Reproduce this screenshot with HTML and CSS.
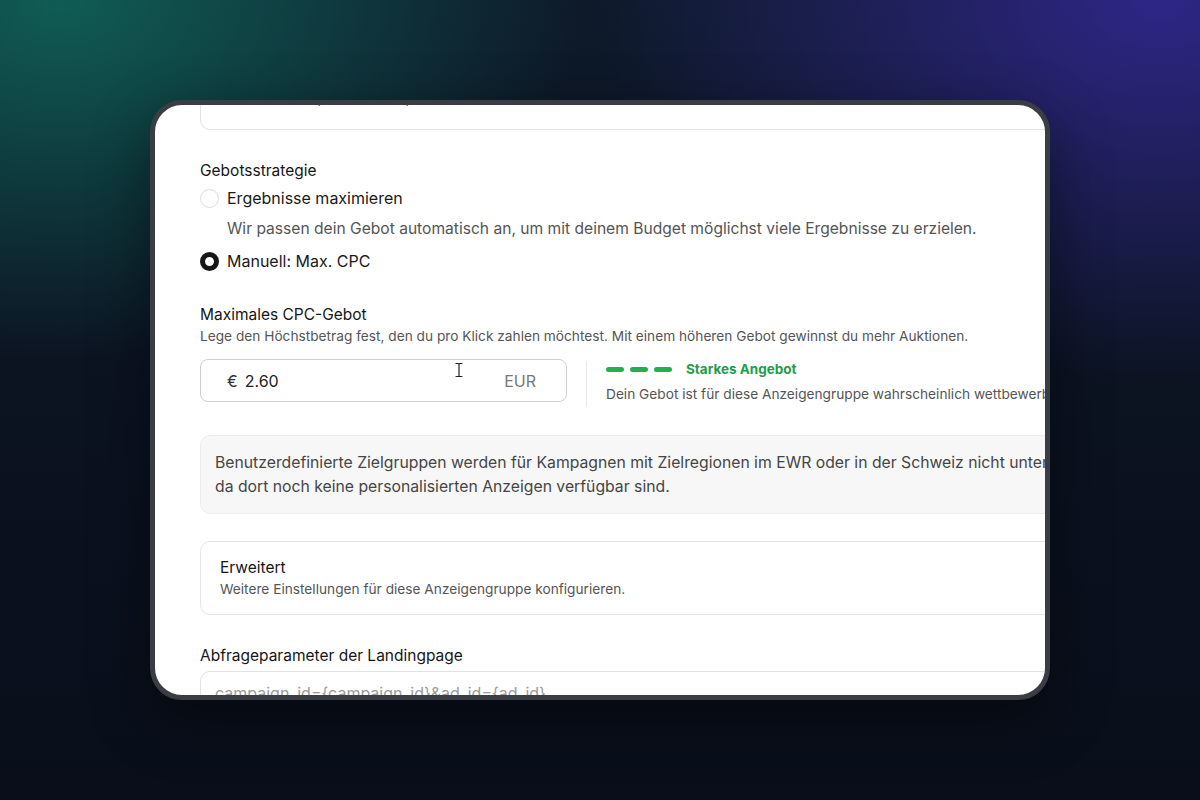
FILE: index.html
```html
<!DOCTYPE html>
<html lang="de">
<head>
<meta charset="utf-8">
<title>Gebotsstrategie</title>
<link rel="stylesheet" href="styles.css">
</head>
<body>
<div class="stage">
  <div class="device">
    <div class="screen">
      <div class="content">
        <div class="top-input"><span class="top-text">Deutschland, Österreich, Schweiz (DACH)</span></div>

        <div class="section strategy">
          <div class="label">Gebotsstrategie</div>
          <div class="radio-row">
            <span class="radio"></span>
            <span class="radio-label">Ergebnisse maximieren</span>
          </div>
          <div class="radio-desc">Wir passen dein Gebot automatisch an, um mit deinem Budget möglichst viele Ergebnisse zu erzielen.</div>
          <div class="radio-row">
            <span class="radio checked"></span>
            <span class="radio-label">Manuell: Max. CPC</span>
          </div>
        </div>

        <div class="section cpc">
          <div class="label">Maximales CPC-Gebot</div>
          <div class="hint">Lege den Höchstbetrag fest, den du pro Klick zahlen möchtest. Mit einem höheren Gebot gewinnst du mehr Auktionen.</div>
          <div class="bid-row">
            <div class="bid-input">
              <span class="currency">€</span>
              <span class="amount">2.60</span>
              <span class="unit">EUR</span>
              <svg class="ibeam" width="8" height="16" viewBox="0 0 8 16"><path d="M1 1.5h2.2M4.8 1.5H7M4 2v12M1 14.5h2.2M4.8 14.5H7M3 1.5c.6 0 1 .3 1 .8M5 1.5c-.6 0-1 .3-1 .8M3 14.5c.6 0 1-.3 1-.8M5 14.5c-.6 0-1-.3-1-.8" fill="none" stroke="#222" stroke-width="1.2" stroke-linecap="round"/></svg>
            </div>
            <div class="divider"></div>
            <div class="strength">
              <div class="strength-top">
                <span class="dashes"><i></i><i></i><i></i></span>
                <span class="strength-label">Starkes Angebot</span>
              </div>
              <div class="strength-desc">Dein Gebot ist für diese Anzeigengruppe wahrscheinlich wettbewerbsfähig.</div>
            </div>
          </div>
        </div>

        <div class="notice">Benutzerdefinierte Zielgruppen werden für Kampagnen mit Zielregionen im EWR oder in der Schweiz nicht unterstützt,<br>da dort noch keine personalisierten Anzeigen verfügbar sind.</div>

        <div class="advanced">
          <div class="adv-title">Erweitert</div>
          <div class="adv-desc">Weitere Einstellungen für diese Anzeigengruppe konfigurieren.</div>
        </div>

        <div class="section query">
          <div class="label">Abfrageparameter der Landingpage</div>
          <div class="query-input">campaign_id={campaign_id}&amp;ad_id={ad_id}</div>
        </div>
      </div>
    </div>
  </div>
</div>
</body>
</html>
```

FILE: styles.css
```css
* { box-sizing: border-box; }
html, body { margin: 0; padding: 0; }
body {
  width: 1200px;
  height: 800px;
  overflow: hidden;
  font-family: Inter, "Noto Sans", sans-serif;
  background:
    radial-gradient(ellipse 520px 360px at 60px 0px, rgba(16, 104, 92, 0.85), rgba(16, 104, 92, 0) 100%),
    radial-gradient(ellipse 560px 380px at 1160px 0px, rgba(52, 40, 150, 0.85), rgba(52, 40, 150, 0) 100%),
    linear-gradient(180deg, #0e1a2a 0%, #0b1220 55%, #090e1a 100%);
}
.stage {
  padding: 100px 0 0 150px;
}
.device {
  width: 900px;
  height: 600px;
  border: 5px solid #3b3d44;
  border-radius: 32px;
  background: #fff;
  overflow: hidden;
  box-shadow: 0 20px 60px rgba(0, 0, 0, 0.45);
}
.screen {
  width: 100%;
  height: 100%;
  overflow: hidden;
  border-radius: 27px;
}
.content {
  width: 1000px;
  margin-top: -22px;
  padding-left: 45px;
  color: #1e1e1e;
}
.top-input {
  width: 960px;
  height: 47px;
  border: 1.5px solid #e2e2e2;
  border-radius: 10px;
  padding: 0 0 0 22px;
  display: flex;
  align-items: center;
}
.top-text {
  font-size: 16px;
  color: #555;
  transform: translateY(-10px);
}
.section { display: flex; flex-direction: column; }
.strategy { margin-top: 31px; }
.label {
  font-size: 15.5px;
  line-height: 20px;
  color: #161616;
  font-weight: 400;
}
.radio-row {
  display: flex;
  align-items: center;
  gap: 8px;
  height: 26px;
  margin-top: 4px;
}
.radio {
  width: 19px;
  height: 19px;
  border-radius: 50%;
  border: 1.5px solid #dcdcdc;
  background: #fff;
  flex: none;
}
.radio.checked {
  border: 5.5px solid #161616;
}
.radio-label {
  font-size: 16px;
  color: #1a1a1a;
}
.radio-desc {
  margin: 7px 0 4px 27px;
  font-size: 15.6px;
  line-height: 22px;
  color: #555;
}
.cpc { margin-top: 31px; }
.hint {
  margin-top: 1px;
  font-size: 13.7px;
  line-height: 20px;
  color: #555;
}
.bid-row {
  display: flex;
  align-items: flex-start;
  margin-top: 13px;
}
.bid-input {
  position: relative;
  width: 367px;
  height: 43px;
  border: 1.5px solid #cfcfcf;
  border-radius: 8px;
  display: flex;
  align-items: center;
  padding: 0 30px 0 26px;
  font-size: 16px;
}
.currency { color: #333; margin-right: 7px; }
.amount { color: #222; flex: 1; }
.unit { color: #777; font-size: 16px; }
.ibeam { position: absolute; left: 254px; top: 2px; }
.divider {
  width: 1px;
  height: 46px;
  background: #e6e6e6;
  margin: 2px 19px 0 19px;
}
.strength { display: flex; flex-direction: column; white-space: nowrap; }
.strength-top {
  display: flex;
  align-items: center;
  gap: 14px;
  height: 20px;
}
.dashes { display: flex; gap: 6px; }
.dashes i {
  display: block;
  width: 18px;
  height: 5px;
  border-radius: 3px;
  background: #21b04e;
}
.strength-label {
  font-size: 13.5px;
  font-weight: 700;
  color: #1f9d4a;
}
.strength-desc {
  margin-top: 5px;
  font-size: 13.7px;
  color: #555;
  line-height: 20px;
}
.notice {
  margin-top: 28px;
  width: 960px;
  background: #f7f7f7;
  border: 1px solid #ededed;
  border-radius: 10px;
  padding: 15px 14px 14px;
  font-size: 15.75px;
  line-height: 24px;
  color: #454545;
  white-space: nowrap;
}
.advanced {
  margin-top: 27px;
  width: 960px;
  border: 1px solid #e5e5e5;
  border-radius: 10px;
  padding: 16px 19px 15px;
}
.adv-title { font-size: 15.5px; line-height: 20px; color: #161616; font-weight: 400; }
.adv-desc { margin-top: 1px; font-size: 13.7px; line-height: 20px; color: #555; }
.query { margin-top: 31px; }
.query-input {
  margin-top: 5px;
  width: 960px;
  height: 44px;
  border: 1.5px solid #e2e2e2;
  border-radius: 10px;
  padding: 11px 0 0 14px;
  font-size: 16px;
  color: #9a9a9a;
}
```
